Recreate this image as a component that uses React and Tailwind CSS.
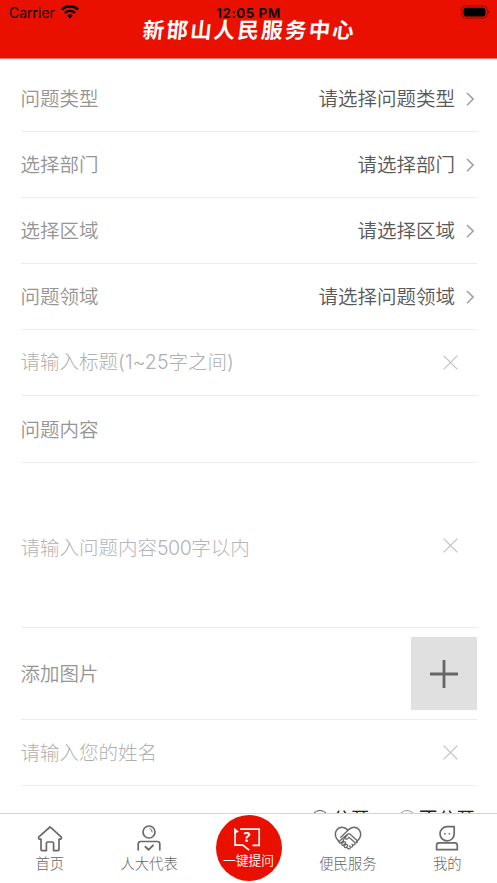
import React from "react";

const CJK = "font-[Inter,'Noto_Sans_CJK_SC',sans-serif]";

function Chevron() {
  return (
    <svg className="ml-[10px] mr-[1px] shrink-0" width="11" height="16" viewBox="0 0 11 16" fill="none" stroke="#a0a0a0" strokeWidth="1.5">
      <path d="M2 2 L8.2 8.1 L2 14.3" />
    </svg>
  );
}

function Clear() {
  return (
    <svg className="mr-[19px] shrink-0" width="15" height="15" viewBox="0 0 15 15" fill="none" stroke="#c4c4c4" strokeWidth="1.3">
      <path d="M.6 .6 L14.4 14.4 M14.4 .6 L.6 14.4" />
    </svg>
  );
}

function Row({ height, children }) {
  return (
    <div className={`flex shrink-0 items-center justify-between border-b border-[#ececec] ${height}`}>{children}</div>
  );
}

function SelectRow({ label, value, height }) {
  return (
    <Row height={height}>
      <span className="font-[350] text-[#959595]">{label}</span>
      <span className="flex items-center font-[350] text-[#585858]">
        {value}
        <Chevron />
      </span>
    </Row>
  );
}

function Tab({ label, children }) {
  return (
    <div className="flex flex-1 flex-col items-center pt-[10px]">
      <svg width="28" height="28" viewBox="0 0 28 28" fill="none" stroke="#6a6a6a" strokeWidth="1.7" strokeLinejoin="round" strokeLinecap="round">
        {children}
      </svg>
      <span className="mt-[2px] text-[14.3px] leading-[20px] font-light text-[#666]">{label}</span>
    </div>
  );
}

export default function App() {
  return (
    <div className={`flex h-[883px] w-[497px] flex-col overflow-hidden bg-white ${CJK}`}>
      <header className="relative h-[59px] shrink-0 border-b border-[#f5726a] bg-[#ea1000]">
        <div className="grid h-[26px] grid-cols-3 items-center text-black">
          <div className="flex items-center pl-[9px]">
            <span className="-mt-px text-[14px]">Carrier</span>
            <svg className="ml-[6px] -mt-[2px]" width="18" height="14" viewBox="0 0 18 14">
              <path d="M.9 4.6 A11.6 11.6 0 0 1 17.1 4.6" fill="none" stroke="#000" strokeWidth="2.4" />
              <path d="M3.9 7.9 A7.3 7.3 0 0 1 14.1 7.9" fill="none" stroke="#000" strokeWidth="2.3" />
              <path d="M9 13.5 L6.2 10.6 A4 4 0 0 1 11.8 10.6 Z" />
            </svg>
          </div>
          <div className="text-center text-[13.5px] font-semibold tracking-[0.5px]">12:05 PM</div>
          <div className="flex justify-end pr-[7px]">
            <svg className="-mt-[2px]" width="29" height="14" viewBox="0 0 29 14">
              <rect x=".8" y=".9" width="25.4" height="12.2" rx="3.6" fill="none" stroke="#930a00" strokeWidth="1" />
              <rect x="2.6" y="2.7" width="21.8" height="8.7" rx="2" />
              <path d="M27.4 4.8 Q29.2 7 27.4 9.2Z" fill="#800900" />
            </svg>
          </div>
        </div>
        <h1 className="absolute top-[16px] left-px w-full -skew-x-6 text-center text-[21.5px] leading-[28px] font-bold tracking-[2.2px] text-white">
          新邯山人民服务中心
        </h1>
      </header>

      <main className="flex h-[754px] shrink-0 flex-col overflow-hidden pr-[20px] pl-[20.5px] text-[19.5px] leading-[28px]">
        <SelectRow label="问题类型" value="请选择问题类型" height="h-[73px] pt-[8px]" />
        <SelectRow label="选择部门" value="请选择部门" height="h-[66px]" />
        <SelectRow label="选择区域" value="请选择区域" height="h-[66px]" />
        <SelectRow label="问题领域" value="请选择问题领域" height="h-[66px]" />
        <Row height="h-[66px]">
          <span className="-mt-px font-light text-[#b0b0b0]">请输入标题<span className="tracking-[0.1px]">(1~25</span>字之间)</span>
          <Clear />
        </Row>
        <Row height="h-[67px]">
          <span className="pt-px font-[350] text-[#959595]">问题内容</span>
        </Row>
        <Row height="h-[165px]">
          <span className="pt-[5px] font-light text-[#b4b4b8]">请输入问题内容<span className="tracking-[-0.5px]">500</span>字以内</span>
          <Clear />
        </Row>
        <Row height="h-[92px]">
          <span className="pt-px font-[350] text-[#959595]">添加图片</span>
          <button className="flex h-[73px] w-[66px] items-center justify-center bg-[#e0e0e0]">
            <svg width="28" height="28" viewBox="0 0 28 28" stroke="#666" strokeWidth="2.8">
              <path d="M14 0V28M0 14H28" />
            </svg>
          </button>
        </Row>
        <Row height="h-[66px]">
          <span className="font-light text-[#b0b0b0]">请输入您的姓名</span>
          <Clear />
        </Row>
        <div className="flex h-[66px] shrink-0 items-center justify-end pr-[2px] text-[18.8px] text-[#222]">
          <i className="mr-[3px] h-[18px] w-[18px] rounded-full border border-[#555]" />
          <span className="pt-[2px]">公开</span>
          <i className="mr-[3px] ml-[28px] h-[18px] w-[18px] rounded-full border border-[#999]" />
          <span className="pt-[2px]">不公开</span>
        </div>
      </main>

      <footer className="flex h-[70px] shrink-0 border-t border-[#d4d4d4] bg-white">
        <Tab label="首页">
          <path d="M14 3 L2.6 13.2 Q2 15.5 5 15.1 V25.5 Q5 26.6 6 26.6 H10.4 V19.3 Q10.4 18 11.7 18 H16.3 Q17.6 18 17.6 19.3 V26.6 H22 Q23 26.6 23 25.5 V15.1 Q26 15.5 25.4 13.2 L15.2 3.8 Q14 2.5 12.8 3.8" />
        </Tab>
        <Tab label="人大代表">
          <circle cx="14" cy="8" r="6" />
          <path d="M14.8 4.5 Q17.2 5.3 17.2 8" strokeWidth="1" />
          <path d="M3.2 25.8 V20 Q3.2 17.5 5.7 17.5 H22.3 Q24.8 17.5 24.8 20 V25.8" />
          <path d="M10.4 22.8 L13.5 25.8 L18 21.3" strokeWidth="1.9" />
        </Tab>
        <div className="flex flex-1 justify-center pt-[1px]">
          <div className="flex h-[66px] w-[66px] flex-col items-center rounded-full bg-[#ea1000] pt-[12px] text-white">
            <svg className="-ml-[3px]" width="28" height="24" viewBox="0 0 28 24" fill="none" stroke="#fff" strokeWidth="1.7">
              <path d="M7 2.2 H26.2 V18.4 H19.5" />
              <path d="M2.1 2 V18.2 H9.8 L16.2 23.2" />
              <path d="M1.2 .8 L5.8 4.8 L1.2 6.8 Z" fill="#fff" stroke="none" />
              <text x="14" y="14.8" textAnchor="middle" fontSize="14" fontWeight="700" fontFamily="Noto Sans" fill="#fff" stroke="none">?</text>
            </svg>
            <span className="text-[12.8px] leading-[20px] font-[350] whitespace-nowrap">一键提问</span>
          </div>
        </div>
        <Tab label="便民服务">
          <path d="M6 19 L3.2 15.3 Q-.2 10.5 2.5 6.4 Q5 2.8 9.2 3.4 Q12.2 4 14 6.3 Q15.8 4 18.8 3.4 Q23 2.8 25.5 6.4 Q28.2 10.5 24.8 15.3 L22.5 18" strokeWidth="1.5" />
          <path d="M14 6.3 L6.8 13.2 M8.7 14.3 L13.8 10 Q15 9.2 16.2 10.2 L23 16.5 Q24 18 22.5 18.7 Q21.7 19.2 20.5 18.2 M13.8 10.3 L10.5 14.6 Q12.7 16.3 15 13.3 L20.8 18.4 Q21.8 20.3 20 21 Q19 21.2 18 20.2 M18.5 20.8 Q19 23 17.3 23.2 L15.3 22 M16.5 23 Q16.2 25.5 14.2 24.7 L12.6 23.3" strokeWidth="1.3" />
          <path d="M5.4 17.2 L8 14.8 Q9.7 14.8 9.4 16.6 L6.8 19 Q5 19.2 5.4 17.2 M7.8 19.8 L10 17.5 Q11.7 17.4 11.5 19.2 L9.2 21.4 Q7.5 21.4 7.8 19.8 M10.1 22 L12 20.2 Q13.8 20.2 13.5 21.9 L11.8 23.6 Q10.2 23.7 10.1 22" strokeWidth="1.2" />
        </Tab>
        <Tab label="我的">
          <path d="M21.2 2.7 V9.7 A7.1 7.1 0 1 1 14.1 2.7 Z" />
          <circle cx="11.8" cy="9.8" r=".4" strokeWidth="1" />
          <circle cx="16.2" cy="9.8" r=".4" strokeWidth="1" />
          <path d="M5.8 18.8 H21.8 Q24.3 18.8 24.3 21.3 V25.7 H3.6 V21.3 Q3.6 18.8 5.8 18.8 Z" />
        </Tab>
      </footer>
    </div>
  );
}
